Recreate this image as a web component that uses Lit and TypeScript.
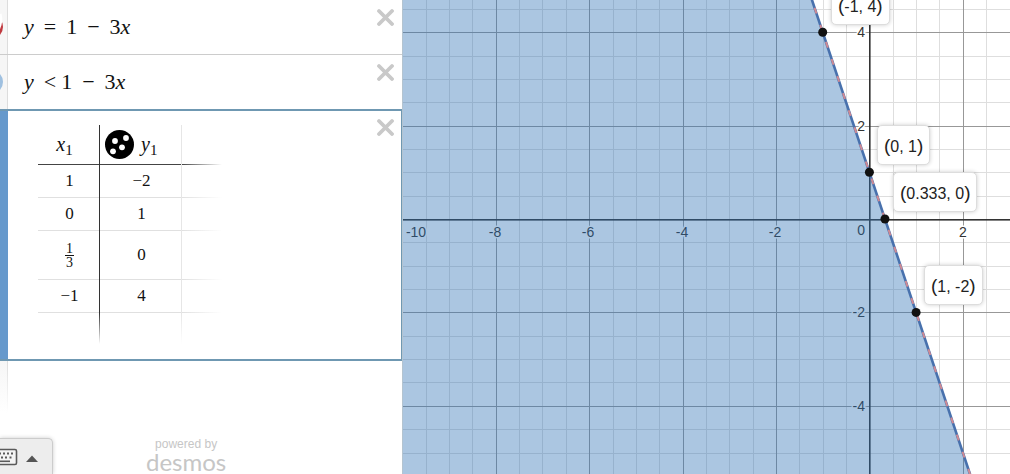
import { LitElement, html, css, svg, nothing } from "lit";
import { customElement, state } from "lit/decorators.js";

interface PlotPoint {
  x: number;
  y: number;
  label: string;
}

const UNIT = 46.7;
const ORIGIN_X = 466.4;
const ORIGIN_Y = 219;
const toX = (x: number) => ORIGIN_X + x * UNIT;
const toY = (y: number) => ORIGIN_Y - y * UNIT;
const AXIS_X = Math.round(ORIGIN_X);

@customElement("graph-paper")
class GraphPaper extends LitElement {
  static styles = css`
    :host {
      display: block;
      position: relative;
      overflow: hidden;
      background: #fff;
      font-family: "Liberation Sans", Arial, sans-serif;
    }
    .plot {
      display: block;
      width: 100%;
      height: 100%;
    }
    .minor {
      fill: #dedede;
    }
    .major {
      fill: #989898;
    }
    .axis {
      fill: #333;
    }
    .tick {
      font-size: 14px;
      fill: #333;
      stroke: #fff;
      stroke-width: 3px;
      paint-order: stroke;
    }
    .shade {
      fill: #2d70b3;
      fill-opacity: 0.4;
    }
    .line {
      stroke: #4871ad;
      stroke-width: 2.6;
    }
    .under {
      stroke: #cf8a94;
      stroke-width: 2;
      stroke-dasharray: 6 12;
    }
    .point {
      fill: #111;
    }
    .tag {
      position: absolute;
      box-sizing: border-box;
      height: 40px;
      padding: 0 6px;
      border: 1px solid #ddd;
      border-radius: 5px;
      background: #fff;
      box-shadow: 0 0 4px rgba(0, 0, 0, 0.2);
      font-size: 16px;
      line-height: 41px;
      color: #222;
      white-space: nowrap;
    }
    .paren {
      font-size: 19px;
      line-height: 19px;
    }
  `;

  @state() private width = 0;
  @state() private height = 0;

  private observer = new ResizeObserver(() => this.measure());

  private points: PlotPoint[] = [
    { x: -1, y: 4, label: "-1, 4" },
    { x: 0, y: 1, label: "0, 1" },
    { x: 1 / 3, y: 0, label: "0.333, 0" },
    { x: 1, y: -2, label: "1, -2" },
  ];

  connectedCallback() {
    super.connectedCallback();
    this.observer.observe(this);
  }

  disconnectedCallback() {
    this.observer.disconnect();
    super.disconnectedCallback();
  }

  private measure() {
    this.width = this.clientWidth;
    this.height = this.clientHeight;
  }

  private gridLines() {
    const steps = Array.from({ length: 121 }, (_, i) => i - 40).filter((n) => n !== 0);
    const draw = (major: boolean) => {
      const cls = major ? "major" : "minor";
      const shown = steps.filter((n) => (n % 4 === 0) === major);
      const columns = shown.map((n) => Math.round(toX(n / 2))).filter((x) => x >= 0 && x < this.width);
      const rows = shown.map((n) => Math.round(toY(n / 2))).filter((y) => y >= 0 && y < this.height);
      return [
        columns.map((x) => svg`<rect class=${cls} x=${x} y="0" width="1" height="100%"></rect>`),
        rows.map((y) => svg`<rect class=${cls} x="0" y=${y} width="100%" height="1"></rect>`),
      ];
    };
    return [draw(false), draw(true)];
  }

  private ticks() {
    const values = Array.from({ length: 60 }, (_, i) => (i - 29) * 2).filter((v) => v !== 0);
    const across = values.filter((v) => toX(v) > -5 && toX(v) < this.width - 12);
    const down = values.filter((v) => toY(v) > 12 && toY(v) < this.height - 8);
    return [
      across.map((v) => svg`<text class="tick" text-anchor="middle" x=${Math.max(13, Math.round(toX(v)) - (v < 0 ? 1 : 0))} y=${ORIGIN_Y + 18}>${v}</text>`),
      down.map((v) => svg`<text class="tick" text-anchor="end" x=${AXIS_X - 4} y=${Math.round(toY(v)) + 5}>${v}</text>`),
    ];
  }

  render() {
    const f = (x: number) => 1 - 3 * x;
    const a = { x: toX(-8), y: toY(f(-8)) };
    const b = { x: toX(20), y: toY(f(20)) };
    return html`
      <svg class="plot" role="img" aria-label="Graph of y = 1 − 3x">
        ${this.gridLines()}
        <rect class="axis" x=${AXIS_X} y="0" width="1.6" height="100%"></rect>
        <rect class="axis" x="0" y=${ORIGIN_Y} width="100%" height="1.6"></rect>
        ${this.ticks()}
        <text class="tick" text-anchor="end" x=${AXIS_X - 4} y=${ORIGIN_Y + 16}>0</text>
        <polygon class="shade" points="${a.x},${a.y} ${b.x},${b.y} -2000,${b.y} -2000,${a.y}"></polygon>
        <line class="line" x1=${a.x} y1=${a.y} x2=${b.x} y2=${b.y}></line>
        <line class="under" x1=${a.x} y1=${a.y} x2=${b.x} y2=${b.y}></line>
        ${this.points.map((p) => svg`<circle class="point" cx=${toX(p.x)} cy=${toY(p.y)} r="4.5"></circle>`)}
      </svg>
      ${this.points.map(
        (p) => html`<div class="tag" style="left:${Math.round(toX(p.x)) + 8}px;top:${Math.round(toY(p.y)) - 47}px"
          ><span class="paren">(</span>${p.label}<span class="paren">)</span></div>`
      )}
    `;
  }
}

@customElement("app-root")
class AppRoot extends LitElement {
  static styles = css`
    :host {
      display: flex;
      height: 100vh;
      overflow: hidden;
      background: #fff;
      font-family: "Liberation Sans", Arial, sans-serif;
    }
    .panel {
      display: flex;
      flex-direction: column;
      flex: 0 0 403px;
      box-sizing: border-box;
      border-right: 1px solid #b4c4d0;
      background: #fff;
    }
    graph-paper {
      flex: 1;
      min-width: 0;
    }
    .row {
      display: flex;
      align-items: flex-start;
      box-sizing: border-box;
      height: 55px;
      border-bottom: 1px solid #ccc;
    }
    .row.before {
      height: 54px;
      border-bottom: 0;
    }
    .row.selected {
      height: auto;
      border: solid #6f98b2;
      border-width: 2px 1px 2px 0;
    }
    .gutter {
      align-self: stretch;
      flex: 0 0 8px;
      box-sizing: border-box;
      border-right: 1px solid #ddd;
      background: #f6f6f6;
      overflow: hidden;
    }
    .selected .gutter {
      border: 0;
      background: #6699cc;
    }
    .swatch {
      display: block;
      width: 7px;
      height: 54px;
    }
    .math {
      flex: 1;
      display: flex;
      align-items: center;
      height: 54px;
      padding-left: 16px;
      font: 22px/54px "Liberation Serif", "Times New Roman", serif;
      color: #111;
    }
    .op {
      padding: 0 10px;
    }
    .op.tight {
      padding-right: 5px;
    }
    .close {
      flex: none;
      width: 18px;
      height: 18px;
      margin: 8px 8px 0 0;
      padding: 0;
      border: 0;
      background: none;
    }
    .selected .close {
      margin: 7px 7px 0 0;
    }
    .close svg {
      display: block;
      stroke: #c9c9c9;
      stroke-width: 3.8;
      stroke-linecap: round;
    }
    .sheet {
      flex: 1;
      padding: 14px 0 15px 30px;
    }
    table {
      --edge: #e0e0e0;
      border-spacing: 0;
      table-layout: fixed;
      width: 184px;
      font: 17px/20px "Liberation Serif", "Times New Roman", serif;
      color: #111;
    }
    th,
    td {
      box-sizing: border-box;
      height: 33px;
      padding: 0 0 1px 1px;
      text-align: center;
      vertical-align: middle;
      font-weight: normal;
      background:
        linear-gradient(var(--side), var(--side-end)) right / 1px 100% no-repeat,
        linear-gradient(90deg, var(--edge), var(--edge-end)) bottom / 100% 1px no-repeat;
      --edge-end: var(--edge);
      --side-end: var(--side);
    }
    .cx {
      width: 62px;
      --side: #333;
    }
    .cy {
      width: 82px;
      --side: #e6e6e6;
    }
    .cz {
      --side: transparent;
      --edge-end: transparent;
    }
    .head th {
      height: 40px;
      --edge: #444;
      font-size: 20px;
      font-style: italic;
    }
    .head .cx {
      padding-right: 10px;
    }
    .head .cz {
      --edge-end: transparent;
    }
    .tall td {
      height: 49px;
    }
    .last td {
      height: 31px;
      --edge: transparent;
      --side-end: transparent;
    }
    sub {
      font-size: 15px;
      font-style: normal;
      line-height: 10px;
      vertical-align: -4px;
    }
    .head-y {
      display: flex;
      align-items: center;
      gap: 7px;
      padding-left: 4px;
    }
    .dots {
      display: block;
      width: 29px;
      height: 29px;
    }
    .frac {
      display: inline-flex;
      flex-direction: column;
      font-size: 14px;
      line-height: 13px;
      vertical-align: middle;
    }
    .num {
      border-bottom: 1px solid #111;
      padding: 0 1px;
    }
    .rest {
      flex: 1;
      display: flex;
      align-items: flex-end;
      min-height: 0;
      background:
        linear-gradient(#ddd, transparent) 7px 0 / 1px 52px no-repeat,
        linear-gradient(#f6f6f6, #fff) 0 0 / 7px 52px no-repeat;
    }
    .keys {
      display: flex;
      align-items: center;
      gap: 8px;
      box-sizing: border-box;
      width: 53px;
      height: 36px;
      padding: 0;
      border: solid #ccc;
      border-width: 1px 1px 0 0;
      border-radius: 0 5px 0 0;
      background: #ededed;
      box-shadow: 0 0 4px rgba(0, 0, 0, 0.2);
    }
    .keys svg {
      display: block;
    }
    .brand {
      display: flex;
      flex-direction: column;
      align-items: center;
      margin-left: 93px;
      color: #c6c6c6;
      text-decoration: none;
    }
    .by {
      font-size: 12px;
      line-height: 12px;
    }
    .name {
      font: 24px/24px Lato, sans-serif;
    }
  `;

  private rows = [
    { x: "1", y: "−2" },
    { x: "0", y: "1" },
    { x: "1/3", y: "0" },
    { x: "−1", y: "4" },
    { x: "", y: "" },
  ];

  private closeButton() {
    return html`<button class="close" aria-label="Delete">
      <svg width="18" height="18" viewBox="0 0 18 18"><path d="M3 3 16 16M16 3 3 16"></path></svg>
    </button>`;
  }

  private value(v: string) {
    if (!v.includes("/")) return v || nothing;
    const [n, d] = v.split("/");
    return html`<span class="frac"><span class="num">${n}</span><span>${d}</span></span>`;
  }

  render() {
    return html`
      <section class="panel">
        <div class="row">
          <div class="gutter">
            <svg class="swatch" viewBox="0 0 7 54">
              <circle cx="-9" cy="27" r="12" fill="#c0393f"></circle>
              <path d="M-6 40C-3 34 -2 30 0 25C1 21 1 17 0 14" fill="none" stroke="#fff" stroke-width="3"></path>
            </svg>
          </div>
          <div class="math"><i>y</i><span class="op">=</span>1<span class="op">−</span>3<i>x</i></div>
          ${this.closeButton()}
        </div>
        <div class="row before">
          <div class="gutter">
            <svg class="swatch" viewBox="0 0 7 54"><circle cx="-9" cy="27" r="12" fill="#9fc0e0"></circle></svg>
          </div>
          <div class="math"><i>y</i><span class="op tight">&lt;</span>1<span class="op">−</span>3<i>x</i></div>
          ${this.closeButton()}
        </div>
        <div class="row selected">
          <div class="gutter"></div>
          <div class="sheet">
            <table>
              <thead>
                <tr class="head">
                  <th class="cx">x<sub>1</sub></th>
                  <th class="cy">
                    <div class="head-y">
                      <svg class="dots" viewBox="0 0 29 29">
                        <circle cx="14.5" cy="14.5" r="14.5" fill="#000"></circle>
                        <g fill="#fff">
                          <circle cx="10" cy="11" r="2.9"></circle>
                          <circle cx="21" cy="8" r="2.9"></circle>
                          <circle cx="17" cy="17.3" r="2.9"></circle>
                          <circle cx="8" cy="21.3" r="2.9"></circle>
                        </g>
                      </svg>
                      <span>y<sub>1</sub></span>
                    </div>
                  </th>
                  <th class="cz"></th>
                </tr>
              </thead>
              <tbody>
                ${this.rows.map(
                  (r) => html`<tr class=${r.x.includes("/") ? "tall" : r.x ? "" : "last"}>
                    <td class="cx">${this.value(r.x)}</td>
                    <td class="cy">${this.value(r.y)}</td>
                    <td class="cz"></td>
                  </tr>`
                )}
              </tbody>
            </table>
          </div>
          ${this.closeButton()}
        </div>
        <div class="rest">
          <button class="keys" aria-label="Show keypad">
            <svg width="18" height="18" viewBox="0 0 18 18">
              <rect x="-8" y="1.5" width="24.5" height="15" rx="1.5" fill="#f4f4f4" stroke="#5a5a5a" stroke-width="1.6"></rect>
              <g fill="#5a5a5a">
                <path d="M0 4.5h1v2H0zM3 4.5h2v2H3zM7 4.5h2v2H7zM11 4.5h2v2h-2zM1 8.5h2v2H1zM5 8.5h2v2H5zM9.500 8.500h2v2h-2z"></path>
                <rect x="-4" y="12.500" width="14" height="1.600"></rect>
              </g>
            </svg>
            <svg width="12" height="18" viewBox="0 0 12 18"><path d="M0 14 6 7.500 12 14z" fill="#555"></path></svg>
          </button>
          <a class="brand" href="#"><span class="by">powered by</span><span class="name">desmos</span></a>
        </div>
      </section>
      <graph-paper></graph-paper>
    `;
  }
}
